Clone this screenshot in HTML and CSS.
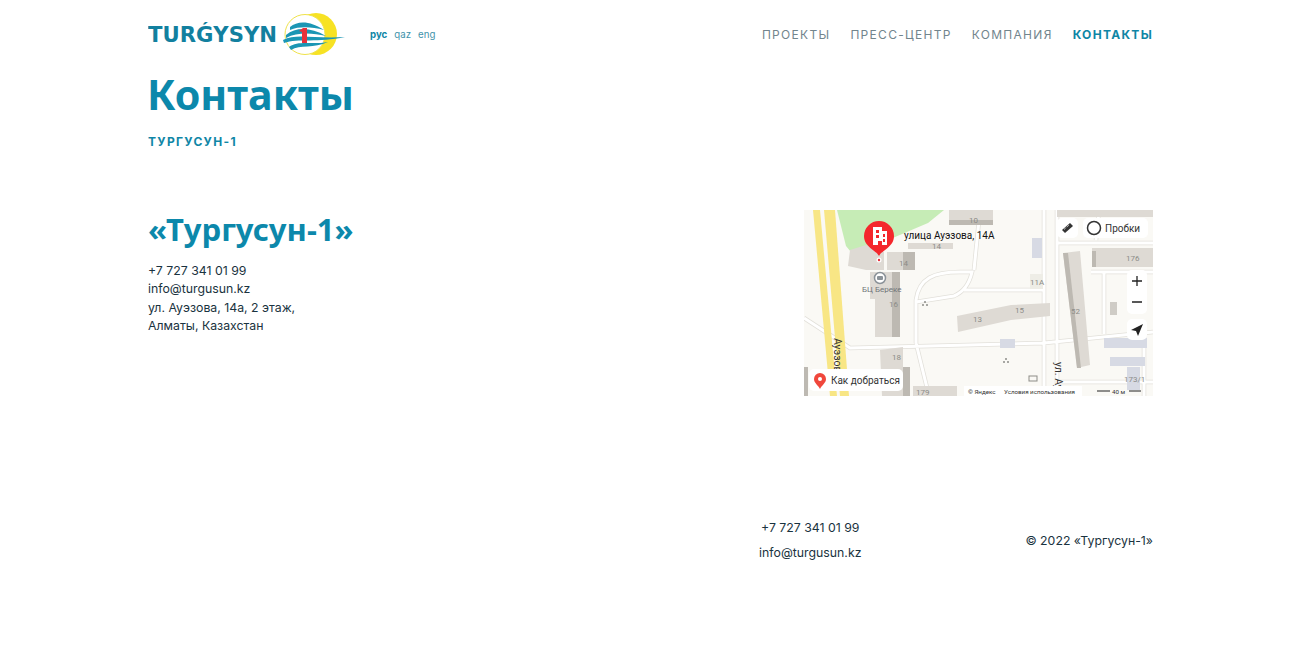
FILE: index.html
```html
<!DOCTYPE html>
<html lang="ru">
<head>
    <meta charset="UTF-8">
    <meta name="viewport" content="width=device-width, initial-scale=1.0">
    <title>Контакты</title>
    <link rel="stylesheet" href="styles.css">
</head>
<body>
    <div class="wrap">
        <header class="header">
            <div class="header-left">
                <svg class="logo" width="198" height="44" viewBox="0 0 198 44">
                    <circle cx="168" cy="22" r="21" fill="#f7e224"/>
                    <circle cx="157" cy="22.500" r="20" fill="#fff" stroke="#efe24a" stroke-width="1"/>
                    <path d="M142 15 C150 8 163 9 176 18 C164 15 152 14 142 18Z" fill="#1b96b4"/>
                    <path d="M138 23 C148 15 162 15 178 24 C164 21 150 20 138 26Z" fill="#1b96b4"/>
                    <path d="M135 28 C148 21 166 27 197 25 C170 31 150 26 136 31Z" fill="#1b96b4"/>
                    <path d="M141 35 C150 28 164 33 180 30 C166 37 152 32 143 38Z" fill="#1b96b4"/>
                    <path d="M151 19 L155 16 H159 V31 H154 V20Z" fill="#e8303a"/>
                    <text x="0" y="30" class="logo-text" textLength="129" lengthAdjust="spacingAndGlyphs">TURǴYSYN</text>
                </svg>
                <ul class="langs">
                    <li class="current">рус</li>
                    <li>qaz</li>
                    <li>eng</li>
                </ul>
            </div>
            <nav class="nav">
                <a href="#">Проекты</a>
                <a href="#">Пресс-центр</a>
                <a href="#">Компания</a>
                <a href="#" class="active">Контакты</a>
            </nav>
        </header>

        <h1>Контакты</h1>
        <div class="subtitle">Тургусун-1</div>

        <section class="contacts">
            <div class="contacts-info">
                <h2>«Тургусун-1»</h2>
                <p>+7 727 341 01 99<br>info@turgusun.kz<br>ул. Ауэзова, 14а, 2 этаж,<br>Алматы, Казахстан</p>
            </div>
            <svg class="map" width="349" height="186" viewBox="0 0 349 186">
                <defs>
                    <path id="roads" d="M0 108 46 138 240 133 349 122M156 62C130 62 115 68 112 90V133M156 62H168Q164 80 150 86L112 92M240 0V186M253 0V186M176 0 170 60M252 33H349M287 62H349M253 172H349M160 80H240M295 0 292 30M300 62V124M340 124V186M112 133 125 186"/>
                </defs>
                <rect width="349" height="186" fill="#faf9f5"/>
                <!-- greenery -->
                <path d="M33 0H140L124 13 84 30 52 48 42 36Z" fill="#c6ecb6"/>
                <!-- roads -->
                <use href="#roads" fill="none" stroke="#e2e0da" stroke-width="4.500"/>
                <use href="#roads" fill="none" stroke="#fff" stroke-width="3"/>
                <!-- street -->
                <path d="M9 0H16L33 186H26Z" fill="#f8e685"/>
                <path d="M20 0H31L45 186H36Z" fill="#f8e685"/>
                <!-- buildings -->
                <g fill="#dedad4">
                    <path d="M46 40 62 35 80 42V60H62L44 56Z"/>
                    <rect x="104" y="33" width="45" height="6"/>
                    <path d="M83 42H111V60H83Z"/>
                    <rect x="66" y="62" width="30" height="27"/>
                    <rect x="71" y="89" width="25" height="38"/>
                    <path d="M76 140 99 137V157H106V186H78Z"/>
                    <rect x="109" y="176" width="44" height="10"/>
                    <rect x="145" y="0" width="44" height="15"/>
                    <rect x="253" y="0" width="96" height="7"/>
                    <rect x="288" y="38" width="61" height="19"/>
                    <path d="M259 43 276 41 286 155 273 158Z"/>
                    <path d="M153 106 207 95 246 93V106L207 110 154 122Z"/>
                </g>
                <g fill="#bdb9b2">
                    <path d="M88 62H96V127H88Z"/>
                    <rect x="99" y="42" width="12" height="18"/>
                    <rect x="288" y="41" width="4" height="16"/>
                    <path d="M259 43H264L277 158H273Z"/>
                    <rect x="145" y="10" width="44" height="5"/>
                    <rect x="0" y="157" width="4" height="29"/>
                    <rect x="99" y="157" width="7" height="29"/>
                </g>
                <g fill="#d7dae4">
                    <rect x="228" y="28" width="10" height="20"/>
                    <rect x="300" y="128" width="43" height="10"/>
                    <rect x="306" y="147" width="35" height="9"/>
                    <rect x="323" y="157" width="13" height="23"/>
                    <rect x="196" y="129" width="15" height="9"/>
                </g>
                <rect x="306" y="92" width="7" height="13" fill="#cfccc6"/>
                <rect x="226" y="64" width="13" height="15" fill="#eeede6"/>
                <!-- entrance marks -->
                <g fill="#8d8d88">
                    <circle cx="119" cy="95" r="1"/>
                    <circle cx="123" cy="95" r="1"/>
                    <circle cx="121" cy="92" r="1"/>
                    <circle cx="200" cy="152" r="1"/>
                    <circle cx="204" cy="152" r="1"/>
                    <circle cx="202" cy="149" r="1"/>
                    <rect x="225" y="166" width="8" height="5" fill="none" stroke="#8d8d88"/>
                </g>
                <!-- labels -->
                <g class="map-label">
                    <text x="165" y="13">10</text>
                    <text x="95" y="56">14</text>
                    <text x="128" y="39">14</text>
                    <text x="85" y="97">16</text>
                    <text x="88" y="150">18</text>
                    <text x="226" y="75">11А</text>
                    <text x="322" y="51">176</text>
                    <text x="267" y="104">52</text>
                    <text x="211" y="103">15</text>
                    <text x="169" y="112">13</text>
                    <text x="112" y="185">179</text>
                    <text x="320" y="172">173/1</text>
                </g>
                <text x="58" y="82" class="map-small">БЦ Береке</text>
                <text class="map-street" transform="translate(30 128) rotate(90)">Ауэзова</text>
                <text class="map-street" transform="translate(251 152) rotate(90)">ул. Ау</text>
                <!-- business centre mark -->
                <circle cx="76" cy="68" r="5.500" fill="#fff" stroke="#8b9298" stroke-width="1.500"/>
                <rect x="73" y="66" width="6" height="4" rx="1" fill="#8b9298"/>
                <!-- pin -->
                <circle cx="75" cy="50" r="2.500" fill="#fff"/>
                <circle cx="75" cy="50" r="1.200" fill="#e8303a"/>
                <path d="M75 46C72 40 60 37 60 26A15 15 0 0 1 90 26C90 37 78 40 75 46Z" fill="#f4272c"/>
                <path d="M69 35V17H78V21H83V35H78V31H74V35Z" fill="#fff"/>
                <path d="M72 20H75V23H72ZM72 25H75V28H72ZM79 24H81V27H79ZM79 29H81V32H79Z" fill="#f4272c"/>
                <text x="100" y="29" class="map-title">улица Ауэзова, 14А</text>
                <!-- controls -->
                <g class="map-btn">
                    <rect x="253" y="8" width="21" height="20" rx="5"/>
                    <rect x="279" y="8" width="65" height="20" rx="5"/>
                    <rect x="323" y="60" width="20" height="44" rx="5"/>
                    <rect x="323" y="109" width="20" height="21" rx="5"/>
                    <rect x="5" y="159" width="94" height="22" rx="5"/>
                    <rect x="160" y="176" width="118" height="10"/>
                </g>
                <path d="M258 20 266 13 269 16 261 23Z" fill="#333"/>
                <path d="M260 19.500 265 15" stroke="#fff" stroke-width="1" stroke-dasharray="1 1"/>
                <circle cx="290" cy="18" r="6.500" fill="none" stroke="#333" stroke-width="1.500"/>
                <text x="301" y="22" class="map-text">Пробки</text>
                <path d="M333 66V76M328 71H338M328 92H338" stroke="#222" stroke-width="1.300" fill="none"/>
                <path d="M339 114 327 120 332 121 334 126Z" fill="#222"/>
                <path d="M16 179C14 175 10 173 10 169A6 6 0 0 1 22 169C22 173 18 175 16 179Z" fill="#f0473c"/>
                <circle cx="16" cy="169" r="2" fill="#fff"/>
                <text x="27" y="174" class="map-text">Как добраться</text>
                <text x="164" y="184" class="map-copy">© Яндекс</text>
                <text x="200" y="184" class="map-copy">Условия использования</text>
                <text x="308" y="184" class="map-copy">40 м</text>
                <path d="M293 181H306M325 181H337" stroke="#222" stroke-width="1"/>
            </svg>
        </section>

        <footer class="footer">
            <div class="footer-contacts">
                <div>+7 727 341 01 99</div>
                <div>info@turgusun.kz</div>
            </div>
            <div class="copyright">© 2022 «Тургусун-1»</div>
        </footer>
    </div>
</body>
</html>
```

FILE: styles.css
```css
* {
    box-sizing: border-box;
}
body {
    margin: 0;
    background: #fff;
    color: #1a3340;
    font-family: Inter, "Liberation Sans", sans-serif;
    font-size: 12.300px;
}
.wrap {
    width: 1004px;
    margin: 0 auto;
}
.header {
    display: flex;
    justify-content: space-between;
    align-items: center;
    height: 68px;
}
.header-left {
    display: flex;
    align-items: center;
}
.logo {
    display: block;
}
.logo-text {
    font-family: "DejaVu Sans", sans-serif;
    font-weight: 700;
    font-size: 21px;
    fill: #12809f;
}
.langs {
    display: flex;
    gap: 7px;
    list-style: none;
    margin: 0 0 0 24px;
    padding: 0;
    font-size: 9.700px;
    color: #3f93ab;
}
.langs .current {
    font-weight: 700;
    color: #0f86a6;
}
.nav {
    display: flex;
    gap: 20px;
    margin-right: -1px;
}
.nav a {
    color: #72858d;
    font-size: 12px;
    font-weight: 400;
    letter-spacing: 1.300px;
    text-decoration: none;
    text-transform: uppercase;
}
.nav a.active {
    color: #0f86a6;
    font-weight: 700;
}
h1 {
    margin: -1px 0 0 -1px;
    color: #0c88ab;
    font-family: "Noto Sans", sans-serif;
    font-size: 41.200px;
    font-weight: 700;
    line-height: 54px;
}
.subtitle {
    margin-top: 13px;
    color: #0f86a6;
    font-size: 12px;
    font-weight: 700;
    letter-spacing: 1.300px;
    line-height: 16px;
    text-transform: uppercase;
}
.contacts {
    display: flex;
    justify-content: space-between;
    margin-top: 60px;
}
.contacts-info h2 {
    margin: -2px 0 0;
    color: #0c88ab;
    font-family: "Noto Sans", sans-serif;
    font-size: 31px;
    font-weight: 700;
    line-height: 42px;
}
.contacts-info p {
    margin: 12px 0 0;
    line-height: 18.300px;
}
.map {
    display: block;
    margin-right: -1px;
}
.map-label text {
    font-family: Roboto, sans-serif;
    font-size: 8px;
    fill: #8c8c88;
}
.map-small {
    font-family: Roboto, sans-serif;
    font-size: 8px;
    fill: #6f7478;
}
.map-street {
    font-family: Roboto, sans-serif;
    font-size: 10.500px;
    fill: #333;
}
.map-title {
    font-family: Roboto, sans-serif;
    font-size: 10px;
    fill: #111;
}
.map-text {
    font-family: Roboto, sans-serif;
    font-size: 10px;
    fill: #333;
}
.map-copy {
    font-family: Roboto, sans-serif;
    font-size: 6.200px;
    fill: #333;
}
.map-btn rect {
    fill: #fff;
}
.footer {
    display: flex;
    justify-content: flex-end;
    align-items: center;
    margin-top: 119px;
    margin-right: -1px;
    text-align: center;
}
.footer-contacts {
    line-height: 25px;
    margin-right: 164px;
}
.copyright {
    line-height: 18px;
    padding-top: 2px;
}
```
